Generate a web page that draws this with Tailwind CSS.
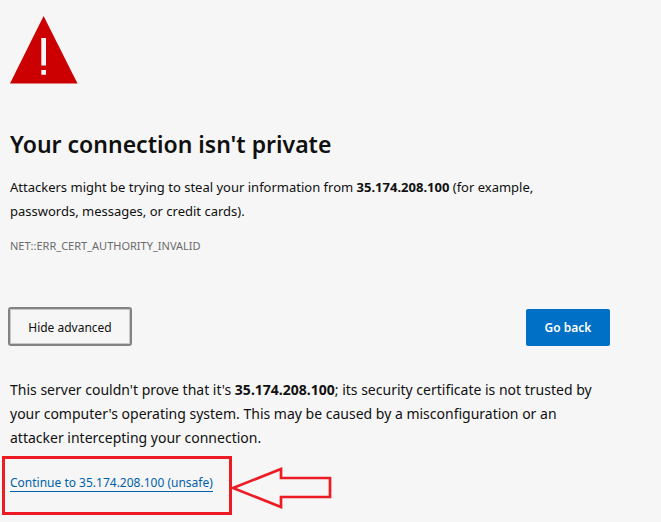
<!DOCTYPE html>
<html lang="en">
  <head>
    <meta charset="UTF-8" />
    <meta name="viewport" content="width=device-width, initial-scale=1.0" />
    <script src="https://cdn.jsdelivr.net/npm/@tailwindcss/browser@4"></script>
    <title>Privacy error</title>
  </head>
  <body class="bg-[#f6f6f6] text-[#101010] font-['Noto_Sans',sans-serif]">
    <main class="max-w-[610px] pl-[10px] pt-4">
      <svg class="block w-[68px] h-[68px]" viewBox="0 0 68 68" aria-hidden="true">
        <path d="M33.6 0L67.5 67.5H0z" fill="#cc0000" />
        <path d="M31.3 22h4.7v27.5h-4.7zM31.3 54h4.7v4.7h-4.7z" fill="#f6f6f6" />
      </svg>

      <h1 class="mt-11 text-[23px] leading-8 font-semibold">Your connection isn't private</h1>
      <p class="mt-[15px] pr-12 text-[13px] leading-6">
        Attackers might be trying to steal your information from
        <strong>35.174.208.100</strong> (for example, passwords, messages, or credit cards).
      </p>
      <p class="mt-[15px] text-[11px] leading-4 text-[#6b6b6b]">NET::ERR_CERT_AUTHORITY_INVALID</p>

      <div class="mt-[55px] flex items-start justify-between text-xs">
        <button type="button" class="h-[35px] w-[120px] rounded-[1px] border border-[#c8c8c8] pt-[2px] outline-2 outline-[#838383]">
          Hide advanced
        </button>
        <button type="button" class="h-[37px] w-[84px] rounded-xs bg-[#0070c6] font-semibold text-white">
          Go back
        </button>
      </div>

      <p class="mt-8 pr-1 text-sm leading-6">
        This server couldn't prove that it's <strong>35.174.208.100</strong>; its security
        certificate is not trusted by your computer's operating system. This may be caused by a
        misconfiguration or an attacker intercepting your connection.
      </p>

      <!-- highlighted link with the arrow pointing at it -->
      <div class="-ml-2 mt-[6px] flex items-center">
        <div class="flex h-[59px] w-[230px] shrink-0 items-center border-3 border-[#ed1c24] pl-[5px] pb-1">
          <a href="#" class="border-b border-[#0061ab] text-xs leading-4 text-[#0061ab]">Continue to 35.174.208.100 (unsafe)</a>
        </div>
        <svg class="mt-1 h-[42px] w-[100px] shrink-0" viewBox="0 0 100 42" aria-hidden="true">
          <path d="M1 21L49 2v9h49v19H49v10z" fill="none" stroke="#ed1c24" stroke-width="2.7" />
        </svg>
      </div>
    </main>
  </body>
</html>
